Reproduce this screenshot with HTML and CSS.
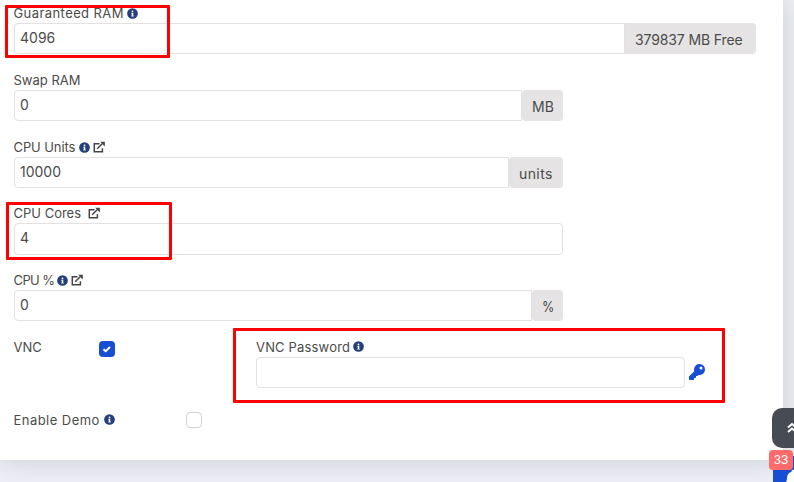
FILE: index.html
```html
<!DOCTYPE html>
<html lang="en">
<head>
<meta charset="utf-8">
<title>VM settings</title>
<link rel="stylesheet" href="styles.css">
</head>
<body>
<svg class="defs" aria-hidden="true">
  <symbol id="info" viewBox="0 0 512 512"><path fill="#253f7c" d="M256 8a248 248 0 1 0 0 496 248 248 0 0 0 0-496z"/><path fill="#fff" d="M256 112a43 43 0 1 1 0 86 43 43 0 0 1 0-86zM204 224h88v132h24v44H196v-44h24v-88h-16z"/></symbol>
  <symbol id="external" viewBox="0 0 12 12"><path fill="none" stroke="#444" stroke-width="1.5" d="M6.500 2.700H1.300v8h8.100V7.200M4.200 7.800l5-5"/><path fill="#444" d="M7.200.8h4.600v4.600z"/></symbol>
</svg>
<main class="card">
  <section class="field">
    <label class="label"><span class="t-guaranteed">Guaranteed RAM</span><svg class="icon"><use href="#info"/></svg></label>
    <div class="group wide"><div class="input joined">4096</div><div class="addon free flush"><span>379837 MB Free</span></div></div>
  </section>
  <section class="field">
    <label class="label"><span class="t-swap">Swap RAM</span></label>
    <div class="group"><div class="input joined">0</div><div class="addon mb"><span>MB</span></div></div>
  </section>
  <section class="field tight">
    <label class="label"><span class="t-units">CPU Units</span><svg class="icon"><use href="#info"/></svg><svg class="icon ext"><use href="#external"/></svg></label>
    <div class="group"><div class="input joined">10000</div><div class="addon units"><span>units</span></div></div>
  </section>
  <section class="field tight">
    <label class="label"><span class="t-cores">CPU Cores</span><svg class="icon ext far"><use href="#external"/></svg></label>
    <div class="group tall"><div class="input">4</div></div>
  </section>
  <section class="field">
    <label class="label"><span class="t-percent">CPU %</span><svg class="icon"><use href="#info"/></svg><svg class="icon ext"><use href="#external"/></svg></label>
    <div class="group"><div class="input joined">0</div><div class="addon percent"><span>%</span></div></div>
  </section>
  <section class="vnc">
    <label class="label vnc-name"><span class="t-vnc">VNC</span></label>
    <span class="check on"><svg viewBox="0 0 16 16"><path d="M4.500 8.200l2.200 2 4.300-4.200"/></svg></span>
    <div class="password">
      <label class="label"><span class="t-password">VNC Password</span><svg class="icon"><use href="#info"/></svg></label>
      <div class="password-row"><div class="input"></div>
        <svg class="key" viewBox="0 0 512 512"><path d="M512 176c0 97-79 176-176 176-11 0-22-1-33-3l-24 27a24 24 0 0 1-18 8h-37v40a24 24 0 0 1-24 24h-40v40a24 24 0 0 1-24 24H24a24 24 0 0 1-24-24v-78c0-6 3-12 7-17l162-162a176 176 0 1 1 343-55zM336 128a48 48 0 1 0 96 0 48 48 0 0 0-96 0z"/></svg>
      </div>
    </div>
  </section>
  <section class="demo">
    <label class="label"><span class="t-demo">Enable Demo</span><svg class="icon"><use href="#info"/></svg></label>
    <span class="check"></span>
  </section>
</main>
<div class="mark mark-ram"></div>
<div class="mark mark-cores"></div>
<div class="mark mark-vnc"></div>
<div class="to-top"><svg viewBox="0 0 12 12"><path d="M2 5.500L6 2l4 3.500M2 10L6 6.500l4 3.500"/></svg></div>
<div class="bell"><svg viewBox="0 0 24 24"><path d="M12 1a2 2 0 0 0-2 2v.5C6 4.500 4 8 4 12c0 4-1 5-3 7h22c-2-2-3-3-3-7 0-4-2-7.500-6-8.500V3a2 2 0 0 0-2-2z"/></svg></div>
<div class="badge">33</div>
</body>
</html>
```
FILE: styles.css
```css
* { box-sizing: border-box; }
body {
  margin: 0;
  height: 482px;
  position: relative;
  overflow: hidden;
  background: #eff0f6;
  color: #4b4b4b;
  font-family: Inter, sans-serif;
  font-size: 13px;
}
.defs { position: absolute; width: 0; height: 0; }
.card {
  width: 783px;
  height: 460px;
  padding: 4px 0 0 14px;
  background: #fff;
  box-shadow: 0 0 28px rgba(60, 65, 85, .22);
}
.label { display: flex; align-items: center; height: 19px; padding-bottom: 1px; white-space: nowrap; }
.label span { flex: none; margin-left: -.5px; line-height: 16px; }
.t-guaranteed { width: 109.5px; letter-spacing: .42px; }
.t-swap { width: 67px; }
.t-units { width: 61px; letter-spacing: -.1px; }
.t-cores { width: 67px; }
.t-percent { width: 39px; letter-spacing: -.6px; }
.t-password { width: 93px; letter-spacing: .17px; }
.t-demo { width: 86px; letter-spacing: .46px; }
.icon { width: 11px; height: 11px; margin-left: 4px; flex: none; }
.ext { width: 12px; height: 12px; margin-left: 3px; }
.far { margin-left: 7px; }
.field { margin-bottom: 17px; }
.tight { margin-bottom: 16px; }
.group { display: flex; width: 549px; height: 31px; }
.wide { width: 742px; }
.tall { height: 32px; }
.input {
  flex: 1;
  padding: 0 5px;
  border: 1px solid #e3e1e2;
  border-radius: 4px;
  font-size: 14px;
  line-height: 28px;
}
.joined { border-radius: 4px 0 0 4px; }
.addon {
  flex: none;
  padding-left: 10px;
  border-radius: 4px;
  background: #e5e3e4;
  font-size: 14px;
  line-height: 34px;
  white-space: nowrap;
}
.flush { border-radius: 0 4px 4px 0; }
.free { width: 131px; letter-spacing: -.12px; }
.mb { width: 41px; }
.units { width: 54px; letter-spacing: .4px; }
.percent { width: 31px; }
.percent span { display: inline-block; transform: scaleX(.9); transform-origin: left; }
.vnc { display: flex; height: 72px; }
.vnc-name { width: 85px; }
.vnc .label { padding-bottom: 2px; }
.check {
  width: 16px;
  height: 16px;
  border: 1px solid #d5d3d4;
  border-radius: 4px;
  flex: none;
}
.on { margin-top: 3px; border: 0; background: #164fd3; }
.on svg { display: block; fill: none; stroke: #fff; stroke-width: 2; }
.password { width: 460px; margin-left: 141px; }
.password .label span { margin-left: 0; }
.password-row { display: flex; align-items: center; height: 31px; }
.password-row .input { flex: none; width: 429px; height: 31px; }
.key { width: 16px; height: 16px; margin: 0 0 1px 4px; fill: #164fd3; fill-rule: evenodd; }
.demo { display: flex; align-items: center; height: 20px; }
.demo .label { width: 172px; }
.mark { position: absolute; border: 3px solid #f00; border-radius: 1px; }
.mark-ram { left: 5px; top: 5px; width: 165px; height: 53px; }
.mark-cores { left: 6px; top: 202px; width: 166px; height: 58px; }
.mark-vnc { left: 233px; top: 328px; width: 492px; height: 75px; }
.to-top {
  position: absolute;
  left: 772px;
  top: 408px;
  width: 40px;
  height: 40px;
  border-radius: 10px;
  background: #474c54;
}
.to-top svg { display: block; width: 12px; height: 12px; margin: 14px 0 0 14px; fill: none; stroke: #fff; stroke-width: 2; }
.bell { position: absolute; left: 773px; top: 456px; width: 40px; height: 40px; background: #164fd3; }
.bell svg { display: block; width: 18px; height: 18px; margin: 13px 0 0 11px; fill: #fff; }
.badge {
  position: absolute;
  left: 769px;
  top: 450px;
  width: 24px;
  height: 20px;
  border-radius: 4px;
  background: #ff6b6b;
  color: #fff;
  font: 13px/20px "Liberation Sans", sans-serif;
  text-align: center;
}
```
